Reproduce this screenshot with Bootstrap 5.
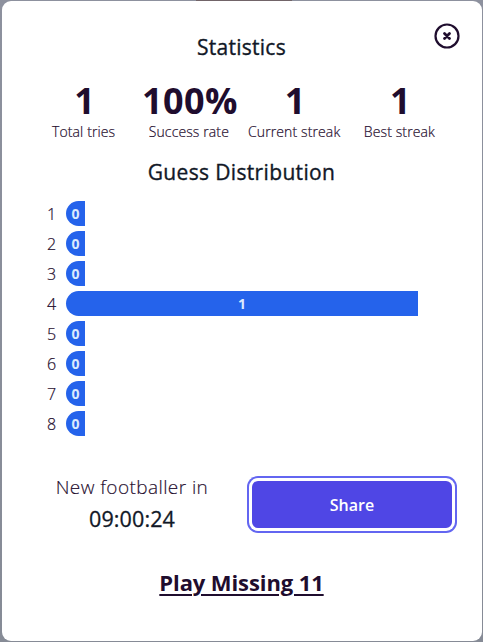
<!DOCTYPE html>
<html lang="en">
<head>
<meta charset="utf-8">
<meta name="viewport" content="width=device-width, initial-scale=1">
<title>Statistics</title>
<link href="https://cdn.jsdelivr.net/npm/bootstrap@5.3.0/dist/css/bootstrap.min.css" rel="stylesheet">
<style>
body{background:linear-gradient(90deg,transparent 196px,#716468 196px 292px,transparent 292px) top/100% 1px no-repeat,linear-gradient(#8d919e,#868b96);height:642px;overflow:hidden;padding:1px 1px 1px 2px;font-family:"Open Sans","Noto Sans",sans-serif;color:#1f0d2e}
.stats-dialog{height:640px;border-radius:9px;padding:31px 30px 0 29px}
.close-btn{top:22px;right:22px;line-height:0;color:#1f0d2e}
.title{font-size:21px;line-height:30px;font-weight:500;color:#111827;margin:0;-webkit-text-stroke:.35px #111827}
.t-stat{letter-spacing:.25px}
.t-guess{letter-spacing:.35px}
.figures{padding-top:17px;height:95px}
.num{font-size:36px;line-height:44px;font-weight:700;letter-spacing:.4px;padding-left:2px}
.lbl{font-size:14px;line-height:18px;font-weight:300;white-space:nowrap;letter-spacing:.12px;-webkit-text-stroke:.2px #1f0d2e}
.bars{padding:14px 34px 0 15px;gap:5px}
.bars .idx{width:20px;height:25px;font-size:16px;font-weight:300;line-height:27px;padding-left:1px;-webkit-text-stroke:.2px #1f0d2e}
.fill{height:25px;min-width:19px;background:#2563eb;color:#dbeafe;border-radius:13px 0 0 13px;font-size:14px;line-height:25px;font-weight:700}
.next{width:202px;font-size:19px;line-height:28px;font-weight:300;letter-spacing:.42px;-webkit-text-stroke:.15px #1f0d2e}
.clock{font-size:21.5px;line-height:36px;font-weight:500;color:#111827;letter-spacing:.1px;-webkit-text-stroke:.3px #111827}
.share-btn{width:200px;height:47px;border-radius:6px;background:#4f46e5;font-size:16px;font-weight:600;box-shadow:0 0 0 3px #fff,0 0 0 5px #6366f1}
.share-btn:hover{background:#4338ca}
.bottom{padding-top:37px;height:131px}
.more{font-size:22px;line-height:30px;font-weight:700;letter-spacing:-.1px;color:#1f0d2e;text-decoration-thickness:2px;text-underline-offset:3px}
</style>
</head>
<body>
<main class="stats-dialog bg-white position-relative text-center">
  <button class="close-btn btn p-0 border-0 position-absolute" aria-label="Close">
    <svg width="26" height="26" viewBox="0 0 26 26" fill="none" stroke="currentColor"><circle cx="13" cy="13" r="11.5" stroke-width="2.2"/><path d="M10.5 10.5l5 5m0-5l-5 5" stroke-width="2.8" stroke-linecap="round"/></svg>
  </button>
  <h1 class="title"><span class="t-stat">Statistics</span></h1>
  <div class="figures row g-0">
    <div class="col"><div class="num">1</div><div class="lbl">Total tries</div></div>
    <div class="col"><div class="num">100%</div><div class="lbl">Success rate</div></div>
    <div class="col"><div class="num">1</div><div class="lbl">Current streak</div></div>
    <div class="col"><div class="num">1</div><div class="lbl">Best streak</div></div>
  </div>
  <h2 class="title"><span class="t-guess">Guess Distribution</span></h2>
  <div class="bars d-flex flex-column text-start">
    <div class="d-flex"><span class="idx">1</span><div class="fill text-center">0</div></div>
    <div class="d-flex"><span class="idx">2</span><div class="fill text-center">0</div></div>
    <div class="d-flex"><span class="idx">3</span><div class="fill text-center">0</div></div>
    <div class="d-flex"><span class="idx">4</span><div class="fill text-center flex-fill">1</div></div>
    <div class="d-flex"><span class="idx">5</span><div class="fill text-center">0</div></div>
    <div class="d-flex"><span class="idx">6</span><div class="fill text-center">0</div></div>
    <div class="d-flex"><span class="idx">7</span><div class="fill text-center">0</div></div>
    <div class="d-flex"><span class="idx">8</span><div class="fill text-center">0</div></div>
  </div>
  <div class="bottom d-flex justify-content-between">
    <div class="next">New footballer in<div class="clock">09:00:24</div></div>
    <div class="pt-2"><button class="share-btn btn text-white border-0 p-0">Share</button></div>
  </div>
  <a class="more" href="#">Play Missing 11</a>
</main>
<script src="https://cdn.jsdelivr.net/npm/bootstrap@5.3.0/dist/js/bootstrap.bundle.min.js"></script>
</body>
</html>
